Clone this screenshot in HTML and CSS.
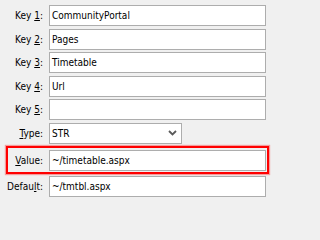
FILE: index.html
```html
<!DOCTYPE html>
<html>
<head>
<meta charset="utf-8">
<link rel="stylesheet" href="styles.css">
</head>
<body>
<div class="form">
  <div class="row"><label class="lbl">Key <u>1</u>:</label><div class="field">CommunityPortal</div></div>
  <div class="row"><label class="lbl">Key <u>2</u>:</label><div class="field">Pages</div></div>
  <div class="row"><label class="lbl">Key <u>3</u>:</label><div class="field">Timetable</div></div>
  <div class="row"><label class="lbl">Key <u>4</u>:</label><div class="field">Url</div></div>
  <div class="row"><label class="lbl">Key <u>5</u>:</label><div class="field"></div></div>
  <div class="row"><label class="lbl"><u>T</u>ype:</label><div class="combo"><span class="combo-text">STR</span><svg class="chev" width="9" height="6" viewBox="0 0 9 6"><path d="M1 1 L4.5 4.5 L8 1" fill="none" stroke="#5a5a5a" stroke-width="1.8"/></svg></div></div>
  <div class="row hl"><label class="lbl"><u>V</u>alue:</label><div class="field">~/timetable.aspx</div></div>
  <div class="row"><label class="lbl">Defau<u>l</u>t:</label><div class="field">~/tmtbl.aspx</div></div>
</div>
</body>
</html>
```
FILE: styles.css
```css
html, body {
  margin: 0;
  padding: 0;
  background: #f0f0f0;
}
body {
  width: 271px;
  height: 207px;
  overflow: hidden;
  font-family: "DejaVu Sans Condensed", "DejaVu Sans", sans-serif;
  font-stretch: semi-condensed;
  font-size: 10px;
  color: #000;
}
.form {
  display: flex;
  flex-direction: column;
  gap: 2.5px;
  padding-top: 5px;
}
.row {
  display: flex;
  align-items: center;
  height: 21px;
}
.lbl {
  width: 43px;
  margin-right: 6px;
  text-align: right;
  white-space: nowrap;
  flex: none;
}
.lbl u {
  text-underline-offset: 1px;
}
.field {
  box-sizing: border-box;
  width: 217px;
  height: 21px;
  border: 1px solid #adadad;
  background: #fff;
  padding: 0 2px;
  line-height: 19px;
  white-space: nowrap;
  overflow: hidden;
}
.combo {
  box-sizing: border-box;
  width: 133px;
  height: 21px;
  border: 1px solid #adadad;
  background: #fff;
  padding: 0 4px 0 2px;
  display: flex;
  align-items: center;
  justify-content: space-between;
}
.chev {
  display: block;
  margin-right: 0px;
}
.row.hl {
  box-sizing: content-box;
  margin-top: 0;
  margin-left: 6px;
  width: 258px;
  border: 2px solid #ff0000;
  box-shadow: 0 0 1px 1px rgba(255, 0, 0, 0.35);
  padding: 2px 1px 0.5px 0;
}
.row.hl .lbl {
  width: 35px;
}
```
